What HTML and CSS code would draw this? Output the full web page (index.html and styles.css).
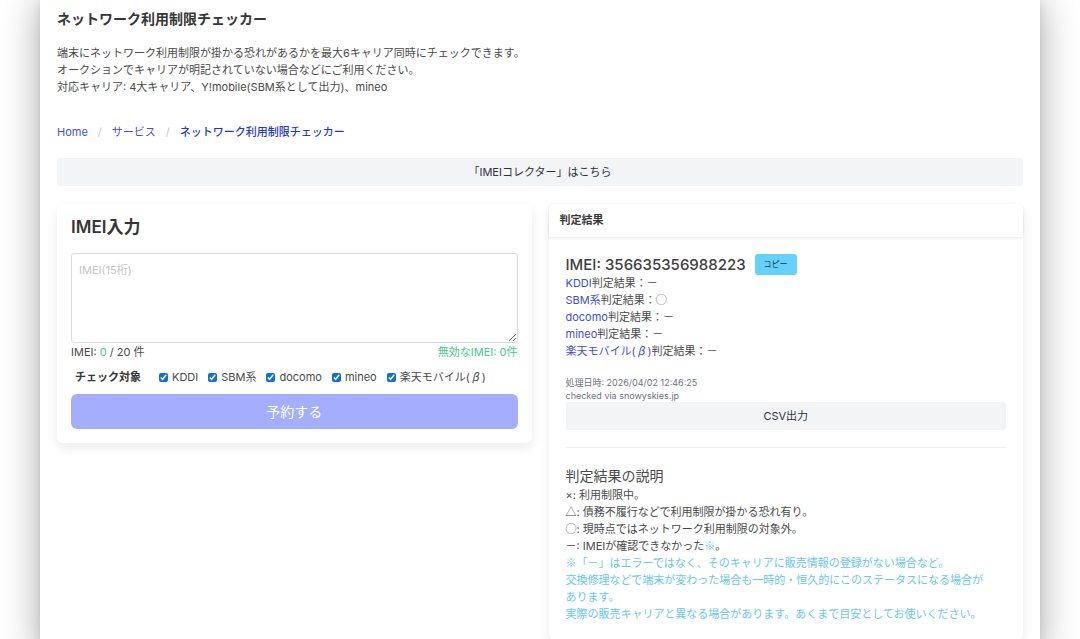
FILE: index.html
```html
<!DOCTYPE html>
<html lang="ja">
<head>
<meta charset="utf-8">
<meta name="viewport" content="width=device-width, initial-scale=1">
<title>ネットワーク利用制限チェッカー</title>
<link rel="stylesheet" href="styles.css">
</head>
<body>
<main class="page">
  <header class="intro">
    <h1 class="page-title">ネットワーク利用制限チェッカー</h1>
    <p class="lead">端末にネットワーク利用制限が掛かる恐れがあるかを最大6キャリア同時にチェックできます。<br>オークションでキャリアが明記されていない場合などにご利用ください。<br>対応キャリア: 4大キャリア、Y!mobile(SBM系として出力)、mineo</p>
  </header>

  <nav class="breadcrumb" aria-label="パンくずリスト">
    <ol class="crumbs">
      <li class="crumb"><a href="#">Home</a></li>
      <li class="crumb"><a href="#">サービス</a></li>
      <li class="crumb"><a class="current" href="#" aria-current="page">ネットワーク利用制限チェッカー</a></li>
    </ol>
  </nav>

  <button class="button wide" type="button">「IMEIコレクター」はこちら</button>

  <div class="columns">
    <form class="card entry">
      <h2 class="entry-title"><label for="imei">IMEI入力</label></h2>
      <textarea class="imei-box" id="imei" placeholder="IMEI(15桁)"></textarea>
      <div class="counts">
        <span>IMEI: <span class="ok">0</span> / 20 件</span>
        <span class="ok">無効なIMEI: 0件</span>
      </div>
      <div class="targets" role="group" aria-labelledby="targets-label">
        <strong class="targets-label" id="targets-label">チェック対象</strong>
        <label class="target"><input type="checkbox" checked>KDDI</label>
        <label class="target"><input type="checkbox" checked>SBM系</label>
        <label class="target"><input type="checkbox" checked>docomo</label>
        <label class="target"><input type="checkbox" checked>mineo</label>
        <label class="target"><input type="checkbox" checked><span>楽天モバイル(<span class="beta">β</span>)</span></label>
      </div>
      <button class="submit" type="submit">予約する</button>
    </form>

    <section class="card result">
      <h2 class="result-header">判定結果</h2>
      <div class="result-body">
        <div class="imei-row">
          <h3 class="imei-title">IMEI: 356635356988223</h3>
          <button class="copy" type="button">コピー</button>
        </div>
        <ul class="lines">
          <li><a href="#">KDDI</a>判定結果：－</li>
          <li><a href="#">SBM系</a>判定結果：<span class="mark">◯</span></li>
          <li><a href="#">docomo</a>判定結果：－</li>
          <li><a href="#">mineo</a>判定結果：－</li>
          <li><a href="#">楽天モバイル(<span class="beta">β</span>)</a>判定結果：－</li>
        </ul>
        <p class="meta">処理日時: 2026/04/02 12:46:25<br>checked via snowyskies.jp</p>
        <button class="button wide" type="button">CSV出力</button>
        <hr class="rule">
        <h3 class="legend-title">判定結果の説明</h3>
        <ul class="lines">
          <li>×: 利用制限中。</li>
          <li><span class="mark">△</span>: 債務不履行などで利用制限が掛かる恐れ有り。</li>
          <li><span class="mark">◯</span>: 現時点ではネットワーク利用制限の対象外。</li>
          <li>－: IMEIが確認できなかった<span class="mark note">※</span>。</li>
        </ul>
        <p class="note"><span class="mark">※</span>「－」はエラーではなく、そのキャリアに販売情報の登録がない場合など。<br>交換修理などで端末が変わった場合も一時的・恒久的にこのステータスになる場合が<br>あります。<br>実際の販売キャリアと異なる場合があります。あくまで目安としてお使いください。</p>
      </div>
    </section>
  </div>
</main>
</body>
</html>
```
FILE: styles.css
```css
*,
*::before,
*::after {
  box-sizing: border-box;
}

body {
  margin: 0;
  background: #fff;
  color: #4a4a4a;
  font-family: Inter, "Noto Sans CJK JP", sans-serif;
  font-size: 11px;
  line-height: 17px;
}

h1, h2, h3, p, ul, ol {
  margin: 0;
  padding: 0;
}

ul, ol {
  list-style: none;
}

a {
  color: #3c4fe0;
  text-decoration: none;
}

button, textarea {
  font: inherit;
}

button {
  border: 0;
  cursor: pointer;
}

.page {
  max-width: 1000px;
  min-height: 100vh;
  margin: 0 auto;
  padding: 8px 17px 17px;
  background: #fff;
  box-shadow: 0 0 36px rgba(0, 0, 0, 0.34), 0 0 8px rgba(0, 0, 0, 0.08);
}

.page-title {
  color: #363636;
  font-size: 14px;
  font-weight: 600;
  line-height: 22px;
}

.lead {
  margin-top: 15px;
}

.breadcrumb {
  margin-top: 28px;
}

.crumbs {
  display: flex;
}

.crumb + .crumb::before {
  content: "/";
  padding: 0 10px;
  color: #c8c8c8;
}

.crumb .current {
  color: #2438d0;
  font-weight: 500;
}

.button {
  padding: 0 12px;
  border-radius: 3px;
  background: #f3f4f6;
  color: #2e333d;
  line-height: 28px;
}

.wide {
  display: block;
  width: 100%;
}

.breadcrumb + .button {
  margin-top: 17px;
}

.columns {
  display: grid;
  grid-template-columns: 1fr 1fr;
  align-items: start;
  gap: 17px;
  margin-top: 18px;
}

.card {
  border-radius: 6px;
  background: #fff;
  box-shadow: 0 5px 12px rgba(10, 10, 10, 0.08), 0 0 1px rgba(10, 10, 10, 0.02);
}

.entry {
  padding: 14px;
}

.entry-title {
  color: #363636;
  font-size: 17px;
  font-weight: 600;
  line-height: 18px;
}

.imei-box {
  display: block;
  width: 100%;
  height: 90px;
  margin-top: 17px;
  padding: 8px 7px;
  border: 1px solid #dbdbdb;
  border-radius: 3px;
  color: #363636;
  resize: vertical;
}

.imei-box::placeholder {
  color: #c3c3c3;
}

.counts {
  display: flex;
  justify-content: space-between;
  margin-top: 1px;
}

.ok {
  color: #48c78e;
}

.targets {
  display: flex;
  flex-wrap: wrap;
  align-items: center;
  gap: 10px;
  margin: 8px 4px;
}

.targets-label {
  margin-right: 8px;
  color: #363636;
  font-weight: 700;
}

.target {
  display: flex;
  align-items: center;
  gap: 4px;
}

.target input {
  width: 9px;
  height: 9px;
  margin: 0;
  accent-color: #0b6fdc;
}

.mark,
.beta {
  font-family: "Noto Sans CJK JP", sans-serif;
  line-height: 1;
}

.beta {
  padding: 0 3px 0 2px;
  font-style: italic;
}

.submit {
  display: block;
  width: 100%;
  padding: 0;
  border-radius: 6px;
  background: #a5adfd;
  color: #fff;
  font-size: 14px;
  line-height: 35px;
}

.result-header {
  padding: 8px 11px;
  border-radius: 6px 6px 0 0;
  box-shadow: 0 1px 3px rgba(10, 10, 10, 0.1);
  color: #363636;
  font-size: 11px;
  font-weight: 700;
}

.result-body {
  padding: 17px;
}

.imei-row {
  display: flex;
  align-items: center;
  gap: 9px;
}

.imei-title {
  color: #404040;
  font-size: 15px;
  font-weight: 500;
  line-height: 21px;
}

.copy {
  padding: 0 9px;
  border-radius: 3px;
  background: #66d1ff;
  color: #1d3440;
  font-size: 8px;
  line-height: 21px;
}

.meta {
  margin-top: 16px;
  color: #6e7280;
  font-size: 9px;
  line-height: 13px;
}

.rule {
  height: 1px;
  margin: 17px 0;
  border: 0;
  background: #eeeff1;
}

.legend-title {
  font-size: 14px;
  font-weight: 400;
  line-height: 22px;
}

.note {
  color: #66c8ee;
}
```
